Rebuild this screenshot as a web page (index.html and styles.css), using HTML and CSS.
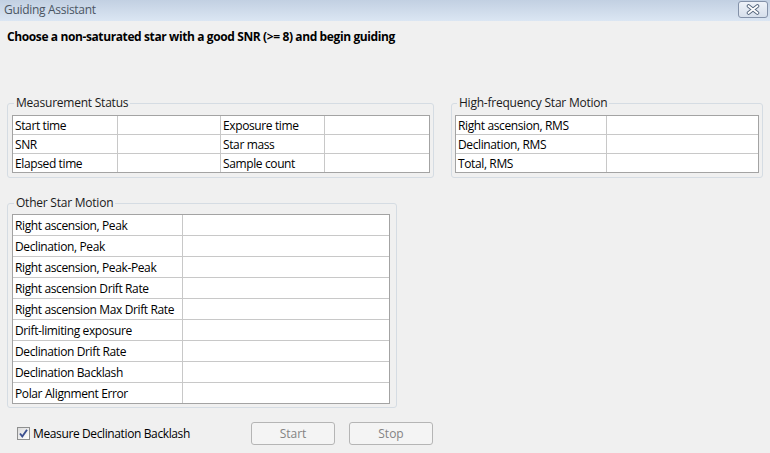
FILE: index.html
```html
<!DOCTYPE html>
<html lang="en">
<head>
<meta charset="utf-8">
<title>Guiding Assistant</title>
<link rel="stylesheet" href="styles.css">
</head>
<body>
<div class="window">
  <div class="titlebar">
    <span class="title">Guiding Assistant</span>
    <button class="close" type="button" aria-label="Close">
      <svg width="14" height="11" viewBox="0 0 14 11">
        <path d="M2.5 2 L11.5 9 M11.5 2 L2.5 9" stroke="#55667d" stroke-width="3.6" stroke-linecap="round" fill="none"/>
        <path d="M2.5 2 L11.5 9 M11.5 2 L2.5 9" stroke="#ffffff" stroke-width="1.8" stroke-linecap="round" fill="none"/>
      </svg>
    </button>
  </div>
  <div class="content">
    <p class="instructions">Choose a non-saturated star with a good SNR (&gt;= 8) and begin guiding</p>
    <div class="top-row">
      <fieldset class="group group-status">
        <legend>Measurement Status</legend>
        <table class="grid">
          <colgroup><col class="c105"><col class="c103"><col class="c104"><col class="c104"></colgroup>
          <tr><td>Start time</td><td></td><td>Exposure time</td><td></td></tr>
          <tr><td>SNR</td><td></td><td>Star mass</td><td></td></tr>
          <tr><td>Elapsed time</td><td></td><td>Sample count</td><td></td></tr>
        </table>
      </fieldset>
      <fieldset class="group group-hf">
        <legend>High-frequency Star Motion</legend>
        <table class="grid">
          <colgroup><col class="c151"><col class="c151"></colgroup>
          <tr><td>Right ascension, RMS</td><td></td></tr>
          <tr><td>Declination, RMS</td><td></td></tr>
          <tr><td>Total, RMS</td><td></td></tr>
        </table>
      </fieldset>
    </div>
    <fieldset class="group group-other">
      <legend>Other Star Motion</legend>
      <table class="grid grid-tall">
        <colgroup><col class="c170"><col class="c206"></colgroup>
        <tr><td>Right ascension, Peak</td><td></td></tr>
        <tr><td>Declination, Peak</td><td></td></tr>
        <tr><td>Right ascension, Peak-Peak</td><td></td></tr>
        <tr><td>Right ascension Drift Rate</td><td></td></tr>
        <tr><td>Right ascension Max Drift Rate</td><td></td></tr>
        <tr><td>Drift-limiting exposure</td><td></td></tr>
        <tr><td>Declination Drift Rate</td><td></td></tr>
        <tr><td>Declination Backlash</td><td></td></tr>
        <tr><td>Polar Alignment Error</td><td></td></tr>
      </table>
    </fieldset>
    <div class="footer">
      <label class="check">
        <span class="box">
          <svg width="11" height="11" viewBox="0 0 11 11">
            <path d="M2 5.5 L4.3 8.5 L9 1.8" stroke="#3b4f8f" stroke-width="1.9" fill="none" stroke-linejoin="miter"/>
          </svg>
        </span>
        <span class="check-label">Measure Declination Backlash</span>
      </label>
      <div class="buttons">
        <button class="btn" type="button" disabled>Start</button>
        <button class="btn" type="button" disabled>Stop</button>
      </div>
    </div>
  </div>
</div>
</body>
</html>
```

FILE: styles.css
```css
* { box-sizing: border-box; }

html, body {
  margin: 0;
  padding: 0;
  background: #f0f0f0;
}

body {
  font-family: "Open Sans", "Noto Sans", "DejaVu Sans", sans-serif;
  font-size: 12px;
  color: #000;
}

.window {
  width: 770px;
  height: 453px;
  overflow: hidden;
  background: #f0f0f0;
}

.titlebar {
  height: 21px;
  display: flex;
  align-items: flex-start;
  justify-content: space-between;
  background: linear-gradient(#c2d0e2, #dbe6f3);
  padding: 0 2px 0 4px;
}

.title {
  font-size: 12px;
  line-height: 19px;
  color: #4a5563;
  letter-spacing: -0.3px;
}

.close {
  margin-top: 1px;
  width: 30px;
  height: 17px;
  padding: 0;
  border: 1px solid #8391a8;
  border-radius: 3px;
  background: linear-gradient(#eef2f8, #d6dfeb);
  display: flex;
  align-items: center;
  justify-content: center;
}

.close svg { display: block; }

.content {
  padding: 0 0 0 7px;
}

.instructions {
  margin: 8px 0 0 0;
  font-weight: 700;
  font-size: 12px;
  line-height: 16px;
  letter-spacing: -0.39px;
}

.top-row {
  display: flex;
  gap: 17px;
  margin-top: 50px;
  align-items: flex-start;
}

.group {
  margin: 0;
  border: 1px solid #d5dce3;
  border-radius: 3px;
  min-width: 0;
}

.group legend {
  padding: 0 2px;
  margin-left: 2px;
  font-size: 12px;
  line-height: 16px;
  color: #1a1a1a;
  letter-spacing: -0.23px;
}

.group-status {
  width: 427px;
  padding: 4px 3px 4px 4px;
}

.group-hf {
  width: 312px;
  padding: 4px 3px 4px 3px;
}

.group-other {
  width: 390px;
  margin-top: 17px;
  padding: 3px 6px 3px 4px;
}

.grid {
  border-collapse: separate;
  border-spacing: 0;
  table-layout: fixed;
  background: #fff;
  border: 1px solid #a3a3a3;
}

.grid td {
  height: 19px;
  padding: 1px 0 0 2px;
  border-right: 1px solid #c8c8c8;
  border-bottom: 1px solid #c8c8c8;
  white-space: nowrap;
  overflow: hidden;
  line-height: 16px;
  font-size: 12px;
  letter-spacing: -0.38px;
}

.grid tr td:last-child { border-right: 0; }
.grid tr:last-child td { border-bottom: 0; height: 18px; }

.grid-tall td { height: 21px; }
.grid-tall tr:last-child td { height: 20px; }

.c103 { width: 103px; }
.c104 { width: 104px; }
.c105 { width: 105px; }
.c151 { width: 151px; }
.c170 { width: 170px; }
.c206 { width: 206px; }

.footer {
  display: grid;
  grid-template-columns: 244px auto;
  align-items: center;
  margin-top: 14px;
}

.check {
  display: flex;
  align-items: center;
  gap: 3px;
  padding-left: 10px;
}

.box {
  width: 13px;
  height: 13px;
  border: 1px solid #8e8f8f;
  background: linear-gradient(135deg, #dcdcdc, #ffffff);
  display: flex;
  align-items: center;
  justify-content: center;
}

.box svg { display: block; }

.check-label {
  line-height: 16px;
  letter-spacing: -0.38px;
}

.buttons {
  display: flex;
  gap: 14px;
}

.btn {
  width: 84px;
  height: 23px;
  padding: 0;
  border: 1px solid #b5b5b5;
  border-radius: 3px;
  background: #f4f4f4;
  color: #838383;
  font-family: "Open Sans", "Noto Sans", "DejaVu Sans", sans-serif;
  font-size: 12px;
}
```
